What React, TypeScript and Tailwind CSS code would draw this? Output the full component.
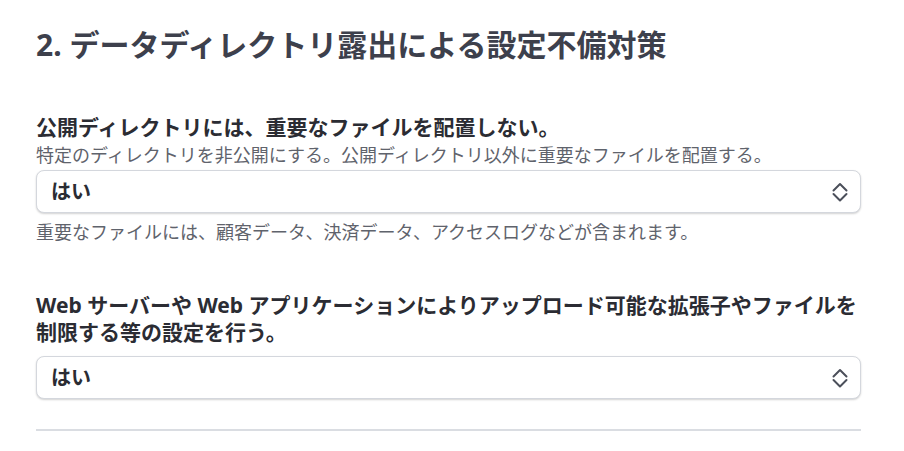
import React, { useState } from "react";

const options = ["はい", "いいえ"];

function Select({ value, onChange }: { value: string; onChange: (v: string) => void }) {
  return (
    <div className="relative">
      <select
        value={value}
        onChange={(e) => onChange(e.target.value)}
        className="w-full h-[43px] appearance-none rounded-lg border border-[#d4d7dd] bg-white pl-[14px] pr-10 text-[20px] font-bold text-[#2b2c33] shadow-[0_1px_2px_rgba(0,0,0,0.18)] outline-none"
      >
        {options.map((o) => (
          <option key={o} value={o}>
            {o}
          </option>
        ))}
      </select>
      <svg
        className="pointer-events-none absolute right-[13px] top-1/2 -translate-y-1/2"
        width="16"
        height="21"
        viewBox="0 0 16 21"
        fill="none"
        stroke="#4b4f5a"
        strokeWidth="2"
        strokeLinecap="round"
        strokeLinejoin="round"
      >
        <path d="M1.5 9 8 2.5 14.5 9" />
        <path d="M1.5 12.5 8 19l6.5-6.5" />
      </svg>
    </div>
  );
}

export default function App() {
  const [a, setA] = useState("はい");
  const [b, setB] = useState("はい");

  return (
    <div className="min-h-screen bg-white font-['Noto_Sans','Noto_Sans_CJK_JP',sans-serif]">
      <div className="w-[825px] ml-[36px] pt-[24px]">
        {/* Heading */}
        <h2 className="text-[30px] leading-[42px] font-bold text-[#3d404c]">
          2. データディレクトリ露出による設定不備対策
        </h2>

        {/* Item 1 */}
        <div className="mt-[48px]">
          <p className="text-[21px] leading-[27px] font-bold text-[#2b2c33]">
            公開ディレクトリには、重要なファイルを配置しない。
          </p>
          <p className="text-[18px] leading-[26px] text-[#5f636c] mt-[1px]">
            特定のディレクトリを非公開にする。公開ディレクトリ以外に重要なファイルを配置する。
          </p>
          <div className="mt-[2px]">
            <Select value={a} onChange={setA} />
          </div>
          <p className="text-[18px] leading-[26px] text-[#5f636c] mt-[6px]">
            重要なファイルには、顧客データ、決済データ、アクセスログなどが含まれます。
          </p>
        </div>

        {/* Item 2 */}
        <div className="mt-[47px]">
          <p className="text-[21px] leading-[27px] font-bold text-[#2b2c33]">
            Web サーバーや Web アプリケーションによりアップロード可能な拡張子やファイルを制限する等の設定を行う。
          </p>
          <div className="mt-[10px]">
            <Select value={b} onChange={setB} />
          </div>
        </div>

        <div className="mt-[30px] h-[2px] bg-[#dadde2]" />
      </div>
    </div>
  );
}
